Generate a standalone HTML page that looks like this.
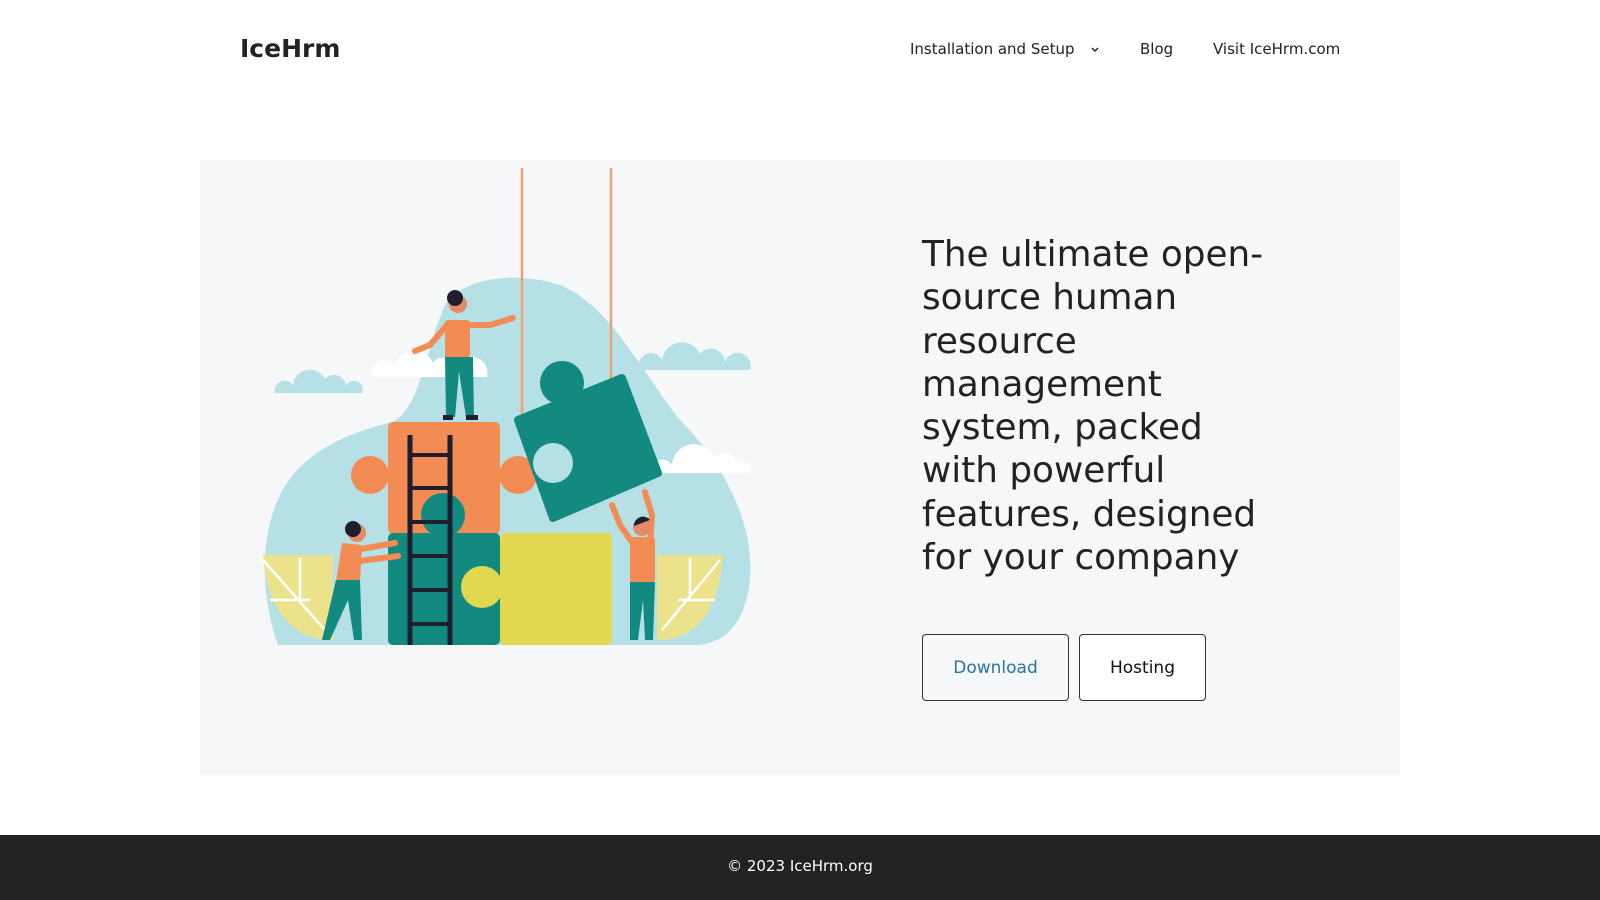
<!DOCTYPE html>
<html><head><meta charset="utf-8">
<style>
*{margin:0;padding:0;box-sizing:border-box}
html,body{width:1600px;height:900px;overflow:hidden;background:#fff;font-family:"DejaVu Sans","Liberation Sans",sans-serif;color:#222}
.logo{position:absolute;left:240px;top:34px;font-size:25px;font-weight:bold;color:#222}
.nav{position:absolute;top:40px;font-size:15px;color:#222;white-space:nowrap}
.hero{position:absolute;left:200px;top:160px;width:1200px;height:615px;background:#f6f7f9}
h1{position:absolute;left:922px;top:233px;width:352px;font-weight:normal;font-size:35.8px;line-height:43.3px;color:#222}
.btn{position:absolute;top:634px;height:67px;border:1px solid #333;border-radius:4px;font-size:17px;display:flex;align-items:center;justify-content:center}
footer{position:absolute;left:0;top:835px;width:1600px;height:65px;background:#222;color:#fff;font-size:15px;text-align:center;line-height:62px}
</style></head><body>
<div class="logo">IceHrm</div>
<div class="nav" style="left:910px">Installation and Setup <svg width="12" height="10" viewBox="0 0 12 10" style="margin-left:10px;vertical-align:middle"><path d="M3,3 L6,6 L9,3" stroke="#222" stroke-width="1.4" fill="none"/></svg></div>
<div class="nav" style="left:1140px">Blog</div>
<div class="nav" style="left:1213px">Visit IceHrm.com</div>
<div class="hero"></div>
<svg style="position:absolute;left:0;top:0" width="1600" height="900" viewBox="0 0 1600 900">
<path d="M278,645 C262,600 258,540 280,495 C300,455 340,435 392,422 C420,410 425,350 445,305 C465,275 520,272 560,285 C610,305 640,370 680,420 C720,460 755,520 750,580 C745,620 730,640 700,645 Z" fill="#b5e0e6"/>
<g fill="#b5e0e6"><path d="M275,393 a10,10 0 0 1 18,-8 a17,17 0 0 1 32,-6 a12,12 0 0 1 21,7 a8,8 0 0 1 16,7 z"/><path d="M640,370 a12,12 0 0 1 22,-10 a20,20 0 0 1 38,-6 a14,14 0 0 1 25,8 a10,10 0 0 1 25,8 z"/></g>
<g fill="#fff"><path d="M373,377 a12,12 0 0 1 22,-10 a20,20 0 0 1 38,-4 a12,12 0 0 1 22,6 a10,10 0 0 1 32,8 z"/><path d="M650,473 a12,12 0 0 1 22,-8 a22,22 0 0 1 42,-8 a14,14 0 0 1 24,8 a6,6 0 0 1 12,8 z"/></g>
<path d="M263,555 L333,555 L333,640 C300,640 268,620 263,555Z" fill="#ece28c"/>
<path d="M723,555 L657,555 L657,640 C690,640 718,620 723,555Z" fill="#ece28c"/>
<g stroke="#fff" stroke-width="2.5"><path d="M263,560 L325,630 M300,558 L300,600 M270,600 L310,600"/><path d="M720,560 L662,630 M690,558 L690,600 M715,600 L678,600"/></g>
<g stroke="#f0a070" stroke-width="2.5"><line x1="522" y1="168" x2="522" y2="415"/><line x1="611" y1="168" x2="611" y2="385"/></g>
<rect x="388" y="422" width="112" height="112" rx="5" fill="#f28b54"/>
<circle cx="370" cy="475" r="19" fill="#f28b54"/><circle cx="518" cy="475" r="19" fill="#f28b54"/>
<rect x="388" y="533" width="112" height="112" rx="5" fill="#138a80"/>
<circle cx="443" cy="515" r="22" fill="#138a80"/>
<rect x="500" y="533" width="112" height="112" rx="5" fill="#e2d84f"/>
<circle cx="482" cy="587" r="21" fill="#e2d84f"/>
<path d="M518,420 L622,378 L658,473 L553,518 Z" fill="#138a80" stroke="#138a80" stroke-width="8" stroke-linejoin="round"/>
<circle cx="562" cy="383" r="22" fill="#138a80"/>
<circle cx="553" cy="463" r="20" fill="#b5e0e6"/>
<g stroke="#1e1e2c" stroke-width="5"><line x1="410" y1="435" x2="410" y2="645"/><line x1="450" y1="435" x2="450" y2="645"/></g>
<g stroke="#1e1e2c" stroke-width="4"><line x1="410" y1="455" x2="450" y2="455"/><line x1="410" y1="488" x2="450" y2="488"/><line x1="410" y1="522" x2="450" y2="522"/><line x1="410" y1="556" x2="450" y2="556"/><line x1="410" y1="590" x2="450" y2="590"/><line x1="410" y1="624" x2="450" y2="624"/></g>
<g stroke="#f28b54" stroke-width="6" stroke-linecap="round" fill="none"><path d="M447,325 L430,345 L415,351"/><path d="M468,325 L490,325 L513,318"/></g>
<rect x="445" y="320" width="25" height="38" rx="3" fill="#f28b54"/>
<path d="M445,357 L473,357 L474,417 L466,417 L459,372 L455,417 L446,417 Z" fill="#138a80"/>
<rect x="443" y="415" width="10" height="5" fill="#1e1e2c"/><rect x="466" y="415" width="12" height="5" fill="#1e1e2c"/>
<circle cx="458" cy="304" r="9" fill="#e48a68"/><circle cx="455" cy="298" r="8" fill="#1e1e2c"/>
<g stroke="#f28b54" stroke-width="6" stroke-linecap="round" fill="none"><path d="M355,550 L395,543"/><path d="M352,562 L398,556"/></g>
<path d="M342,543 L362,545 L360,582 L336,582 Z" fill="#f28b54"/>
<path d="M336,580 L360,580 L362,640 L354,640 L348,600 L330,640 L322,640 Z" fill="#138a80"/>
<circle cx="357" cy="533" r="9" fill="#e48a68"/><circle cx="353" cy="529" r="8" fill="#1e1e2c"/>
<g stroke="#f28b54" stroke-width="6" stroke-linecap="round" fill="none"><path d="M634,545 L620,525 L612,505"/><path d="M650,545 L652,515 L645,492"/></g>
<rect x="630" y="537" width="25" height="46" rx="3" fill="#f28b54"/>
<path d="M630,582 L655,582 L653,640 L645,640 L643,600 L638,640 L630,640 Z" fill="#138a80"/>
<circle cx="642" cy="527" r="9" fill="#e48a68"/><path d="M634,526 a9,9 0 0 1 16,-6 z" fill="#1e1e2c"/>
</svg>
<h1>The ultimate open-source human resource management system, packed with powerful features, designed for your company</h1>
<div class="btn" style="left:922px;width:147px;color:#2a72a8;background:#f6f7f9">Download</div>
<div class="btn" style="left:1079px;width:127px;color:#111;background:#fff">Hosting</div>
<footer>© 2023 IceHrm.org</footer>
</body></html>
